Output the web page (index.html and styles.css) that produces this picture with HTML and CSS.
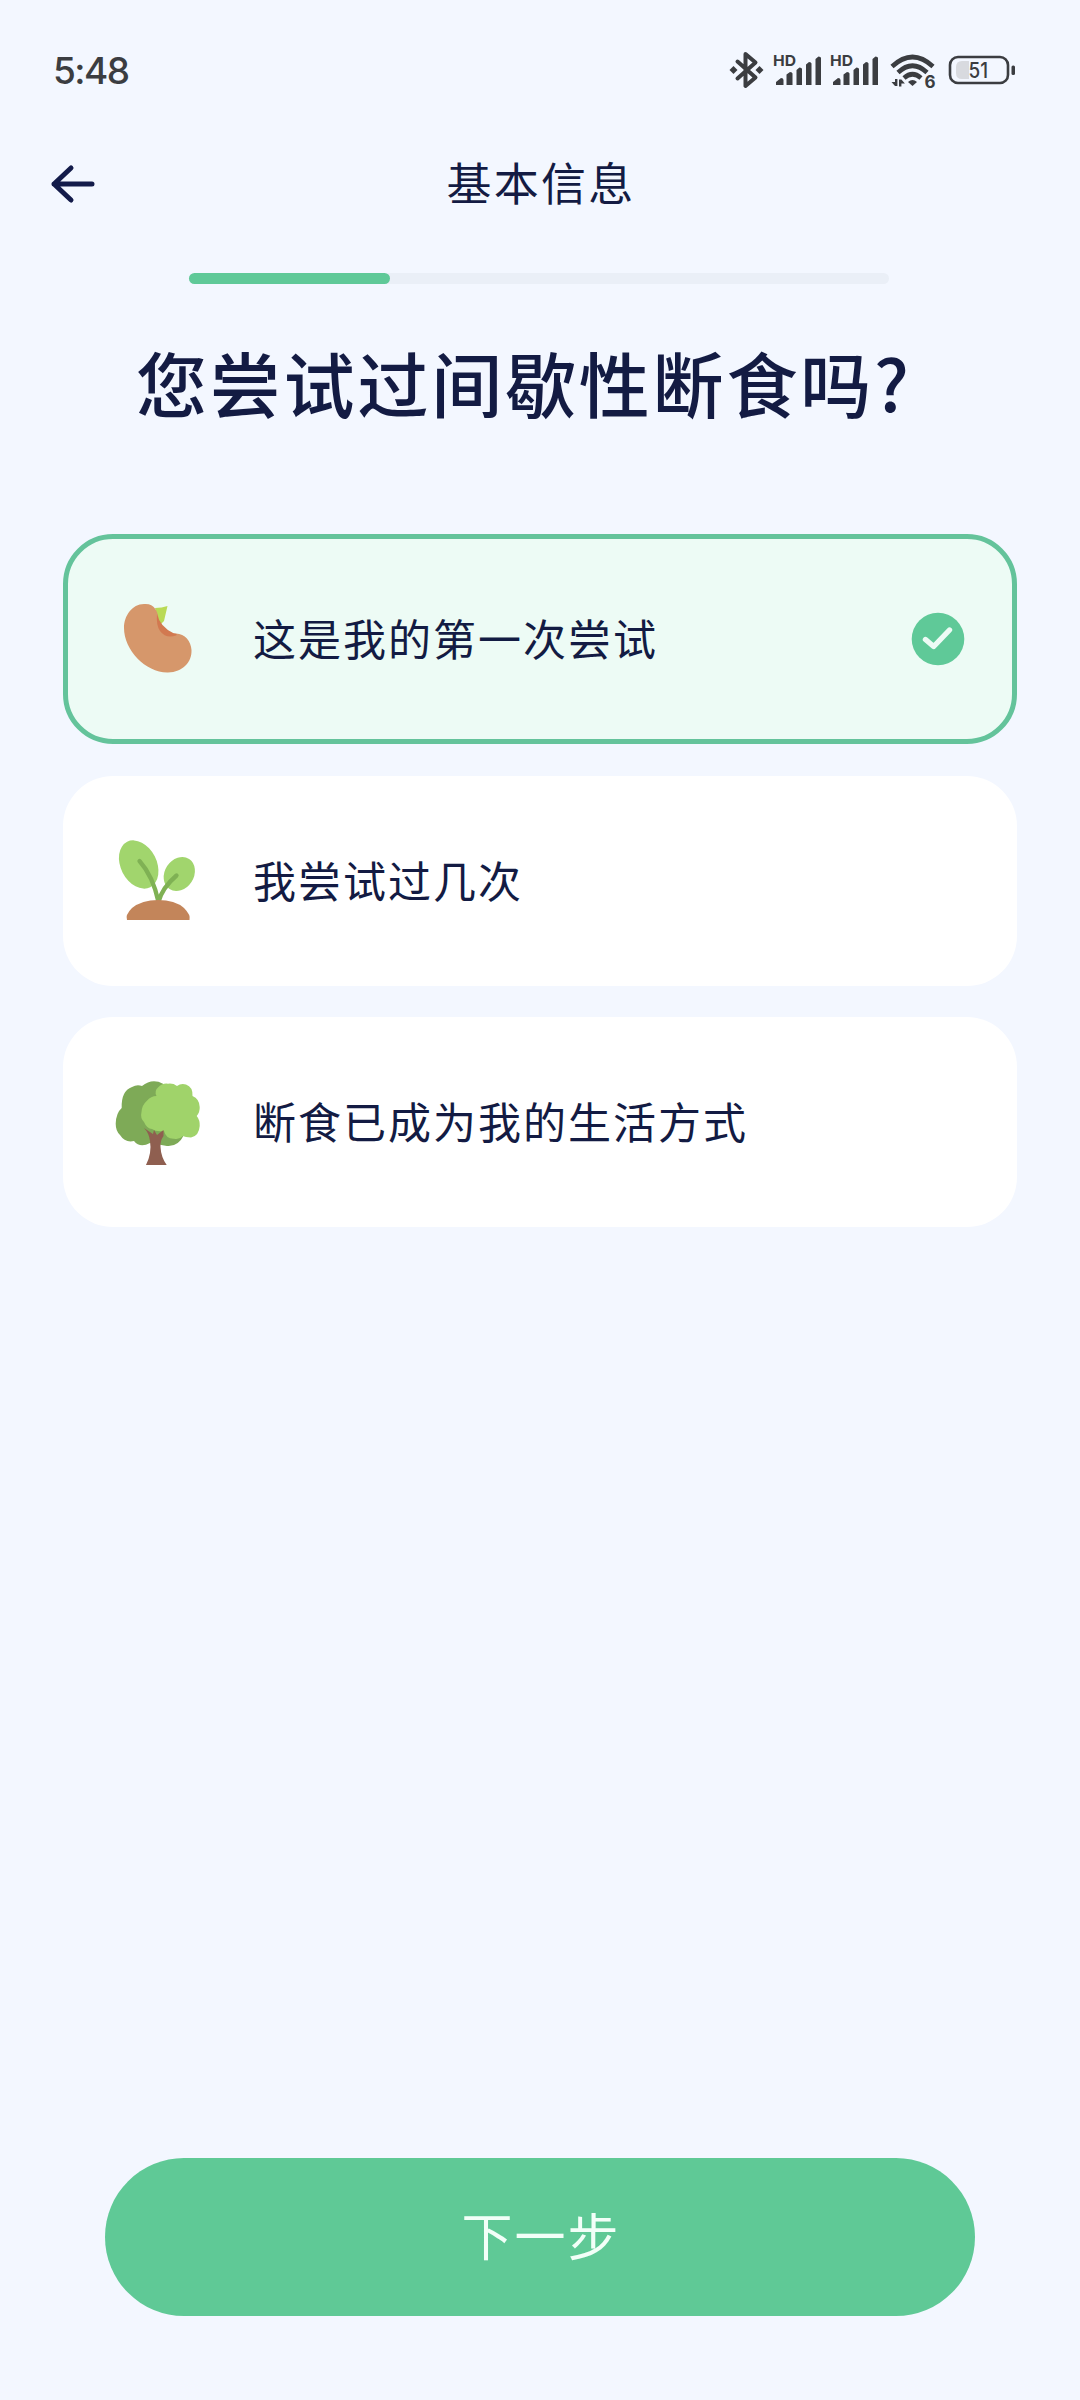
FILE: index.html
```html
<!DOCTYPE html>
<html lang="zh-CN">
<head>
<meta charset="utf-8">
<title>基本信息</title>
<link rel="stylesheet" href="styles.css">
</head>
<body>
<div class="screen">
  <div class="status">
    <span class="time">5:48</span>
    <svg class="status-icons" viewBox="710 40 320 60" fill="#3b3d41">
      <g fill="none" stroke="#3b3d41" stroke-width="4" stroke-linejoin="round" stroke-linecap="round">
        <path d="M737.5 61.5L755.5 77.5L745.5 86V54L755.5 62.5L737.5 78.5"/>
      </g>
      <path d="M729.500 70l4-4 4 4-4 4zM755.500 70l4-4 4 4-4 4z"/>
      <g class="hd"><text x="773" y="66" textLength="23" lengthAdjust="spacingAndGlyphs">HD</text><text x="830" y="66" textLength="23" lengthAdjust="spacingAndGlyphs">HD</text></g>
      <g id="bars"><path d="M776 85v-3l5-4q2.500 0 2.500 2v5zM786.500 85V74.500l3.500-2.500q2.500 0 2.500 1.500v11.500zM796.500 85V70l3-2.500q2.500 0 2.500 1.500v16zM806 85V64.500l3-2.500q2.500 0 2.500 1.500v21.500zM815.500 85V59l3-2.500q2.500 0 2.500 1.500v27z"/></g>
      <use href="#bars" x="57"/>
      <g fill="none" stroke="#3b3d41" stroke-width="4.600">
        <path d="M892 66.500Q912.500 47.500 933 66.500M898 72.500Q912.500 59 927 72.500M904 78Q912.500 70.500 921 78"/>
      </g>
      <path d="M908 82q4.500-4 9 0l-4.500 4z"/>
      <path d="M895 79h2.400v7h-2.400l-3.500-4h3.500zM899 86.500V79.500h2.400l3.500 4h-3.500v3z"/>
      <text class="six" x="924.500" y="87.500">6</text>
      <rect x="950" y="57" width="58" height="26" rx="8" fill="none" stroke="#3b3d41" stroke-width="2.600"/>
      <path fill="#d8dadf" d="M962 61h7v18h-7q-6 0-6-6v-6q0-6 6-6z"/>
      <rect x="1011.500" y="65.500" width="3.500" height="9.500" rx="1.500"/>
      <text class="level" x="968.500" y="77.500" textLength="19.500" lengthAdjust="spacingAndGlyphs">51</text>
    </svg>
  </div>
  <header class="header">
    <svg class="back" viewBox="0 0 48 44" fill="none" stroke="#131b4a" stroke-width="5" stroke-linecap="round" stroke-linejoin="round"><path d="M43 22H5M22 6L5 22L22 38"/></svg>
    <h1 class="title">基本信息</h1>
  </header>
  <div class="progress"><div class="progress-fill"></div></div>
  <h2 class="question">您尝试过间歇性断食吗?</h2>
  <main class="options">
    <div class="option selected">
      <svg class="icon" viewBox="2 0 90 90">
        <path fill="#b9da55" d="M45 14Q52 14 57.500 12L54 27L50 31Z"/>
        <path fill="#d6976b" d="M34 10C44 9 48 17 48.500 25C50 35 57 39 66 39.500C75 40 81 47 81.500 56C82 68 73 78 58 78.500C36 79 14 56 14 34C14 22 22 10 34 10Z"/>
        <path fill="#d27950" d="M47 20Q50 33 64 39.500Q68 39.500 66 41.500Q56 45 50 37Q46 31 47 20Z"/>
      </svg>
      <span class="label">这是我的第一次尝试</span>
      <svg class="check" viewBox="0 0 54 54"><circle cx="27" cy="27" r="26.300" fill="#5fc998"/><path d="M14.500 27.500L22.700 34.500L38.500 18" fill="none" stroke="#edfbf5" stroke-width="5.400" stroke-linecap="round" stroke-linejoin="round"/></svg>
    </div>
    <div class="option">
      <svg class="icon" viewBox="0 0 90 90">
        <ellipse cx="26.700" cy="28.500" rx="18" ry="25.500" transform="rotate(-27 26.700 28.500)" fill="#a1d56d"/>
        <ellipse cx="67.300" cy="38" rx="14.500" ry="18" transform="rotate(33 67.300 38)" fill="#a1d56d"/>
        <path d="M27.500 25Q41 40 46.500 66Q50 52 64.500 39.500" fill="none" stroke="#7fb154" stroke-width="4.300" stroke-linecap="round"/>
        <path fill="#c3855a" d="M15 84Q13 79 20 72Q30 64 46 64Q63 64 72 72Q79 79 77.500 84Z"/>
      </svg>
      <span class="label">我尝试过几次</span>
    </div>
    <div class="option">
      <svg class="icon" viewBox="0 0 90 90">
        <path fill="#7eaa57" d="M9.700 31Q9 14 20 10Q25 7 30 9Q40 1 51 6.700L62 20L72 58Q66 70 55 69L38 66Q28 71.500 22 64Q13 66 8 58Q3.700 54 3.700 46.700Q4 36 9.700 31Z"/>
        <path fill="#a0d36a" d="M44.500 19Q42 14 46 10.500Q50 6 56 6.700Q61 6 65 9Q69 6 74 7.500Q81 10 80.500 19Q87.500 22 87.700 30Q88 35 84.700 39Q88 43 87.700 49Q87 59 79 60.500Q73 60 71 59Q67 63 62 61.700Q54 62 52 54Q44 55 40 52Q35 52 32 45Q28 41 29.500 35Q30 28 34.700 24Q39 19 44.500 19Z"/>
        <path fill="#8f5f50" d="M34 88Q40 76 38 64Q37 56 32 51L41 57L42 53L45 58L51.500 53V59Q48 64 48.500 70Q49 80 54.700 88Z"/>
      </svg>
      <span class="label">断食已成为我的生活方式</span>
    </div>
  </main>
  <button class="next">下一步</button>
</div>
</body>
</html>
```
FILE: styles.css
```css
* { box-sizing: border-box; }
body { margin: 0; }
.screen {
  width: 1080px;
  height: 2400px;
  display: flex;
  flex-direction: column;
  background: #f3f7ff;
  color: #131b43;
  font-family: "Noto Sans CJK SC", sans-serif;
}
.status {
  height: 140px;
  padding: 0 50px 0 53px;
  display: flex;
  align-items: center;
  justify-content: space-between;
}
.time { font: 500 37px/1 Inter, sans-serif; letter-spacing: -1.500px; color: #3b3d41; }
.status-icons { width: 320px; height: 60px; }
.hd { font: 700 15px Inter, sans-serif; }
.six { font: 700 17px Inter, sans-serif; }
.level { font: 500 21px Inter, sans-serif; }
.header {
  height: 88px;
  padding: 0 49px;
  display: grid;
  grid-template-columns: 48px 1fr 48px;
  align-items: center;
}
.back { width: 48px; height: 44px; }
.title {
  margin: 0;
  padding: 0 0 4px 2px;
  text-align: center;
  font-size: 45px;
  font-weight: 400;
  line-height: 60px;
  letter-spacing: 2.300px;
}
.progress {
  width: 700px;
  height: 11px;
  margin: 45px 0 0 189px;
  border-radius: 6px;
  background: #eaeff7;
}
.progress-fill { width: 201px; height: 11px; border-radius: 6px; background: #5fc998; }
.question {
  margin: 45px 0 0 136px;
  font-size: 71px;
  font-weight: 500;
  line-height: 104px;
  letter-spacing: 2.800px;
}
.options {
  margin: 101px 63px 0;
  display: flex;
  flex-direction: column;
  gap: 31.5px;
}
.option {
  height: 210px;
  padding: 0 52px 0 49px;
  display: flex;
  align-items: center;
  border-radius: 50px;
  background: #fff;
}
.option.selected {
  padding: 0 47px 0 44px;
  border: 5px solid #64c39b;
  background: #edfbf5;
}
.icon { width: 90px; height: 90px; flex: none; overflow: visible; }
.label {
  flex: 1;
  margin-left: 51px;
  padding-bottom: 4px;
  font-size: 43px;
  line-height: 64px;
  letter-spacing: 2px;
}
.check { width: 54px; height: 54px; }
.next {
  width: 870px;
  height: 158px;
  margin: auto auto 84px;
  padding: 0 0 5px 2px;
  border: 0;
  border-radius: 79px;
  background: #5fc996;
  color: #f2fff8;
  font: 400 51px/1 "Noto Sans CJK SC", sans-serif;
  letter-spacing: 2px;
}
```
